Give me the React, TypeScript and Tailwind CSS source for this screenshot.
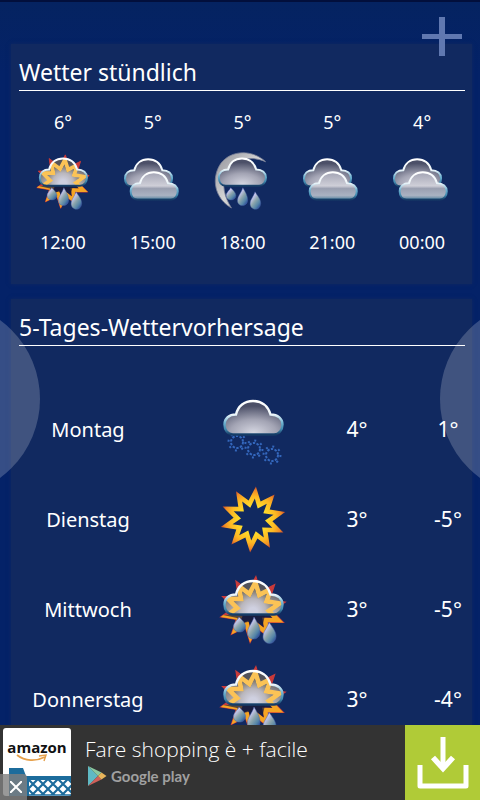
type IconName = "sunRain" | "clouds" | "moonRain" | "snow" | "sun";

const hours: { time: string; temp: string; icon: IconName; label: string }[] = [
  { time: "12:00", temp: "6°", icon: "sunRain", label: "Regenschauer" },
  { time: "15:00", temp: "5°", icon: "clouds", label: "Bewölkt" },
  { time: "18:00", temp: "5°", icon: "moonRain", label: "Regen" },
  { time: "21:00", temp: "5°", icon: "clouds", label: "Bewölkt" },
  { time: "00:00", temp: "4°", icon: "clouds", label: "Bewölkt" },
];

const days: { name: string; icon: IconName; label: string; high: string; low: string }[] = [
  { name: "Montag", icon: "snow", label: "Schnee", high: "4°", low: "1°" },
  { name: "Dienstag", icon: "sun", label: "Sonnig", high: "3°", low: "-5°" },
  { name: "Mittwoch", icon: "sunRain", label: "Regenschauer", high: "3°", low: "-5°" },
  { name: "Donnerstag", icon: "sunRain", label: "Regenschauer", high: "3°", low: "-4°" },
];

const CLOUD =
  "M12 36.5C6.5 36.5 3.5 32 3.5 26.5C3.5 20.5 8 16.5 15 16.5C17 8 23.5 3 32 3C40.5 3 47 8 49.5 16.5C57 16.5 61.5 21 61.5 26.5C61.5 32 58 36.5 53 36.5Z";

// ten-pointed star, slightly turned clockwise
const star = (cx: number, cy: number, outer: number, inner: number) =>
  Array.from({ length: 20 }, (_, i) => {
    const a = ((5 + i * 18) * Math.PI) / 180;
    const r = i % 2 ? inner : outer;
    return `${i ? "L" : "M"}${(cx + r * Math.sin(a)).toFixed(1)} ${(cy - r * Math.cos(a)).toFixed(1)}`;
  }).join("") + "Z";

const SUN_OUTER = star(32, 31.5, 33, 19.5);
const SUN_HOLE = star(32, 31.5, 21, 12);
const SUN_RING = SUN_OUTER + SUN_HOLE;

const Gradients = () => (
  <svg className="absolute h-0 w-0" aria-hidden="true">
    <defs>
      <radialGradient id="cloudFill" cx="0.5" cy="0.95" r="0.8">
        <stop offset="0" stopColor="#d6d7e2" />
        <stop offset="0.5" stopColor="#a3a4b4" />
        <stop offset="1" stopColor="#4c5068" />
      </radialGradient>
      <linearGradient id="cloudFront" x1="0" y1="0" x2="0" y2="1">
        <stop offset="0" stopColor="#a3a4b4" />
        <stop offset="0.5" stopColor="#cfcfd8" />
        <stop offset="0.6" stopColor="#9a9fb0" />
        <stop offset="0.85" stopColor="#aab2c2" />
        <stop offset="1" stopColor="#5884a0" />
      </linearGradient>
      <linearGradient id="cloudEdge" x1="0" y1="0" x2="0" y2="1">
        <stop offset="0" stopColor="#ffffff" />
        <stop offset="0.4" stopColor="#eef6fa" />
        <stop offset="0.65" stopColor="#6fb3d2" />
        <stop offset="0.85" stopColor="#3f86ac" />
        <stop offset="1" stopColor="#163c66" />
      </linearGradient>
      <radialGradient id="sunGlow" cx="0.5" cy="1" r="0.8">
        <stop offset="0" stopColor="#d9dbea" />
        <stop offset="0.4" stopColor="#bcb7b6" />
        <stop offset="1" stopColor="#54535a" />
      </radialGradient>
      <radialGradient id="sunCore" gradientUnits="userSpaceOnUse" cx="32" cy="34" r="22">
        <stop offset="0.2" stopColor="#cfd0e0" />
        <stop offset="0.6" stopColor="#b9b6bc" />
        <stop offset="1" stopColor="#7e7668" />
      </radialGradient>
      <radialGradient id="sunFill" gradientUnits="userSpaceOnUse" cx="32" cy="31.5" r="33">
        <stop offset="0.4" stopColor="#ffdc2a" />
        <stop offset="0.7" stopColor="#fdb823" />
        <stop offset="0.88" stopColor="#f08a26" />
        <stop offset="1" stopColor="#c4402a" />
      </radialGradient>
      <linearGradient id="dropFill" x1="0" y1="0" x2="0.8" y2="1">
        <stop offset="0" stopColor="#8468dc" />
        <stop offset="0.3" stopColor="#c9c8f0" />
        <stop offset="0.55" stopColor="#8ea6ac" />
        <stop offset="0.8" stopColor="#5585a8" />
        <stop offset="1" stopColor="#2a4a98" />
      </linearGradient>
      <linearGradient id="moonFill" x1="0" y1="0" x2="1" y2="1">
        <stop offset="0" stopColor="#8d8e96" />
        <stop offset="0.5" stopColor="#d6d6d6" />
        <stop offset="1" stopColor="#a4a5ac" />
      </linearGradient>
      <clipPath id="cloudClip">
        <path d={CLOUD} />
      </clipPath>
      <clipPath id="belowCloud">
        <path d="M-4 37H70V72H-4Z" />
      </clipPath>
    </defs>
  </svg>
);

const Drops = () => (
  <g fill="url(#dropFill)" stroke="#4a62a8" strokeWidth="0.5">
    <path d="M18 39C21 42 24.5 45 24.5 48.5C24.5 52 22 54 18.5 54C15 54 12.5 52 12.5 48.5C12.5 45 16 43 18 39Z" />
    <path d="M33 39C36 44 39 49 39 54C39 58.5 36 61 32.5 61C29 61 26.5 58.5 26.5 55C26.5 49 31 46 33 39Z" />
    <path d="M48 44C51 49 55 53 55 58C55 62.5 52 65.5 48.5 65.5C45 65.5 42 62.5 42 59C42 53 46 51 48 44Z" />
  </g>
);

const Snowflake = ({ x, y }: { x: number; y: number }) => (
  <g transform={`translate(${x} ${y})`} fill="none" stroke="#3467bc">
    <circle r="6" strokeWidth="2" strokeDasharray="2.4 1.37" />
    <circle r="8.5" strokeWidth="2" strokeDasharray="2 4.68" />
  </g>
);

const WeatherIcon = ({ name, label, className }: { name: IconName; label: string; className: string }) => (
  <svg viewBox="0 0 64 64" role="img" aria-label={label} className={`overflow-visible ${className}`}>
    {name === "sun" && <path d={SUN_RING} fillRule="evenodd" fill="url(#sunFill)" />}
    {name === "snow" && (
      <>
        <Snowflake x={16} y={44} />
        <Snowflake x={33} y={51} />
        <Snowflake x={51} y={57} />
        <path d={CLOUD} fill="url(#cloudFill)" stroke="url(#cloudEdge)" strokeWidth="2.4" />
      </>
    )}
    {name === "sunRain" && (
      <>
        <path d={SUN_OUTER} fill="#c93a3a" stroke="#c93a3a" strokeWidth="1.2" />
        <g clipPath="url(#belowCloud)">
          <path d={SUN_RING} fillRule="evenodd" fill="#f5a524" />
          <path d={SUN_HOLE} fill="#15204a" />
          <path d="M2 37H44L42 46L32 43L22 45L16 40Z" fill="#1a1c3c" opacity="0.7" />
        </g>
        <path d={CLOUD} fill="url(#sunGlow)" />
        <g clipPath="url(#cloudClip)">
          <path d={SUN_RING} fillRule="evenodd" fill="#fbc356" />
          <path d={SUN_HOLE} fill="url(#sunCore)" />
        </g>
        <path d={CLOUD} fill="none" stroke="url(#cloudEdge)" strokeWidth="2.4" />
        <Drops />
      </>
    )}
    {name === "moonRain" && (
      <>
        <path
          d="M61 7C45 -8 19 -8 6 9C-7 28 -1 53 19 64C10 50 7 36 12 23C20 5 40 -2 61 7Z"
          fill="url(#moonFill)"
          stroke="#7a8098"
          strokeWidth="1"
        />
        <path d={CLOUD} fill="url(#cloudFill)" stroke="url(#cloudEdge)" strokeWidth="2.4" />
        <Drops />
      </>
    )}
    {name === "clouds" && (
      <>
        <path
          d={CLOUD}
          transform="translate(-6 1)"
          fill="url(#cloudFill)"
          stroke="url(#cloudEdge)"
          strokeWidth="2.4"
        />
        <path
          d={CLOUD}
          transform="translate(1 17)"
          fill="url(#cloudFront)"
          stroke="url(#cloudEdge)"
          strokeWidth="2.4"
        />
      </>
    )}
  </svg>
);

const SectionTitle = ({ children }: { children: string }) => (
  <h2 className="mr-0.5 ml-px border-b border-white pb-0.5 text-[23px] leading-8">{children}</h2>
);

const HourlyForecast = () => (
  <section className="h-60 bg-[#112960] pt-3 pr-[5px] pl-[7px] shadow-[0_0_4px_#112960]">
    <SectionTitle>Wetter stündlich</SectionTitle>
    <table className="mt-[15px] w-full table-fixed text-center text-lg leading-8">
      <tbody>
        <tr>
          {hours.map((h) => (
            <td key={h.time}>{h.temp}</td>
          ))}
        </tr>
        <tr>
          {hours.map((h) => (
            <td key={h.time} className="h-22">
              <WeatherIcon name={h.icon} label={h.label} className="mx-auto h-13 w-13" />
            </td>
          ))}
        </tr>
        <tr>
          {hours.map((h) => (
            <td key={h.time}>{h.time}</td>
          ))}
        </tr>
      </tbody>
    </table>
  </section>
);

const DailyForecast = () => (
  <section className="mt-[15px] bg-[#112960] pt-3 pr-[5px] pl-[7px] shadow-[0_0_4px_#112960]">
    <SectionTitle>5-Tages-Wettervorhersage</SectionTitle>
    <table className="mt-[39px] w-full table-fixed text-center">
      <colgroup>
        <col className="w-[140px]" />
        <col />
        <col className="w-[144px]" />
        <col className="w-[38px]" />
      </colgroup>
      <tbody>
        {days.map((d) => (
          <tr key={d.name} className="h-[90px] text-[21px]">
            <th scope="row" className="text-xl font-normal">
              {d.name}
            </th>
            <td>
              <WeatherIcon name={d.icon} label={d.label} className="ml-auto h-16 w-16" />
            </td>
            <td>{d.high}</td>
            <td className="whitespace-nowrap">{d.low}</td>
          </tr>
        ))}
      </tbody>
    </table>
  </section>
);

const AmazonLogo = () => (
  <svg viewBox="0 0 68 68" className="h-[68px] w-[68px]" aria-label="amazon" role="img">
    <defs>
      <pattern id="lattice" width="10" height="10" patternUnits="userSpaceOnUse" x="25" y="51">
        <path d="M0 0L10 10M10 0L0 10" stroke="#1c6c9c" strokeWidth="2.2" />
      </pattern>
    </defs>
    <rect width="68" height="68" rx="3" fill="#fff" />
    <text
      x="34"
      y="25"
      textAnchor="middle"
      fontFamily="'Open Sans', sans-serif"
      fontWeight="700"
      fontSize="15"
      fill="#111"
    >
      amazon
    </text>
    <path d="M14 27C22 33.5 33 33.5 42 29" fill="none" stroke="#e6a04a" strokeWidth="1.8" />
    <path d="M36 28L43 27L41 33" fill="none" stroke="#e6a04a" strokeWidth="1.4" />
    <path d="M6 40H20L23 48H68V52H26V68H6Z" fill="#1c6c9c" />
    <rect x="25" y="51" width="43" height="16" fill="url(#lattice)" />
    <path d="M25 67H68" stroke="#1c6c9c" strokeWidth="1.5" />
  </svg>
);

const AdBanner = () => (
  <aside className="relative flex h-[75px] shrink-0 bg-[#333333]">
    <div className="py-[3px] pl-[3px]">
      <AmazonLogo />
    </div>
    <a href="#play" className="ml-3.5 flex-1 pt-2.5">
      <span className="block font-['Open_Sans',sans-serif] text-[21px] leading-7 font-light">
        Fare shopping è + facile
      </span>
      <span className="flex items-center gap-1 pt-0.5 pl-0.5">
        <svg viewBox="0 0 20 22" className="h-[22px] w-5" aria-hidden="true">
          <path d="M1 1V21L11 11Z" fill="#5fb9c4" />
          <path d="M1 1L11 11L14.5 7.5Z" fill="#8cc9a0" />
          <path d="M1 21L11 11L14.5 14.5Z" fill="#d0605a" />
          <path d="M14.5 7.5L11 11L14.5 14.5L19.5 11Z" fill="#e8b45a" />
        </svg>
        <span className="font-['Lato',sans-serif] text-[15px] leading-5 font-bold text-[#a0a0a0]">Google play</span>
      </span>
    </a>
    <button type="button" aria-label="Herunterladen" className="flex w-[75px] items-center justify-center bg-[#b0cb37]">
      <svg viewBox="0 0 52 52" className="h-13 w-13" fill="none" stroke="#fff" strokeWidth="5">
        <path d="M26 0V31" />
        <path d="M16 20.5L26 31.5L36 20.5" strokeWidth="5.5" />
        <path d="M3 28V49H49V28" strokeLinejoin="round" />
      </svg>
    </button>
    <button
      type="button"
      aria-label="Anzeige schließen"
      className="absolute bottom-0 left-0 flex h-[26px] w-[27px] items-center justify-center rounded-tr bg-[#808080]/80 pl-1"
    >
      <svg viewBox="0 0 12 12" className="h-3 w-3" stroke="#fff" strokeWidth="2">
        <path d="M0 0L12 12M12 0L0 12" />
      </svg>
    </button>
  </aside>
);

export default function App() {
  return (
    <div className="flex h-dvh flex-col overflow-hidden bg-[#042268] font-['Noto_Sans',sans-serif] text-white">
      <Gradients />
      <main className="relative min-h-0 flex-1 overflow-hidden border-t-2 border-[#020f3c] bg-linear-to-b from-[#052361] to-[#042268] to-10% pt-[42px] pr-2 pl-[11px]">
        <HourlyForecast />
        <DailyForecast />
        <button type="button" aria-label="Ort hinzufügen" className="absolute top-[15px] right-[18px]">
          <svg viewBox="0 0 40 40" className="h-10 w-10" fill="#6078b0">
            <path d="M17 0H23V17H40V22H23V39H17V22H0V17H17Z" />
          </svg>
        </button>
        <button
          type="button"
          aria-label="Zurück"
          className="absolute top-[299px] -left-[156px] h-[196px] w-[196px] rounded-full bg-white/20"
        />
        <button
          type="button"
          aria-label="Weiter"
          className="absolute top-[299px] -right-[156px] h-[196px] w-[196px] rounded-full bg-white/20"
        />
      </main>
      <AdBanner />
    </div>
  );
}
